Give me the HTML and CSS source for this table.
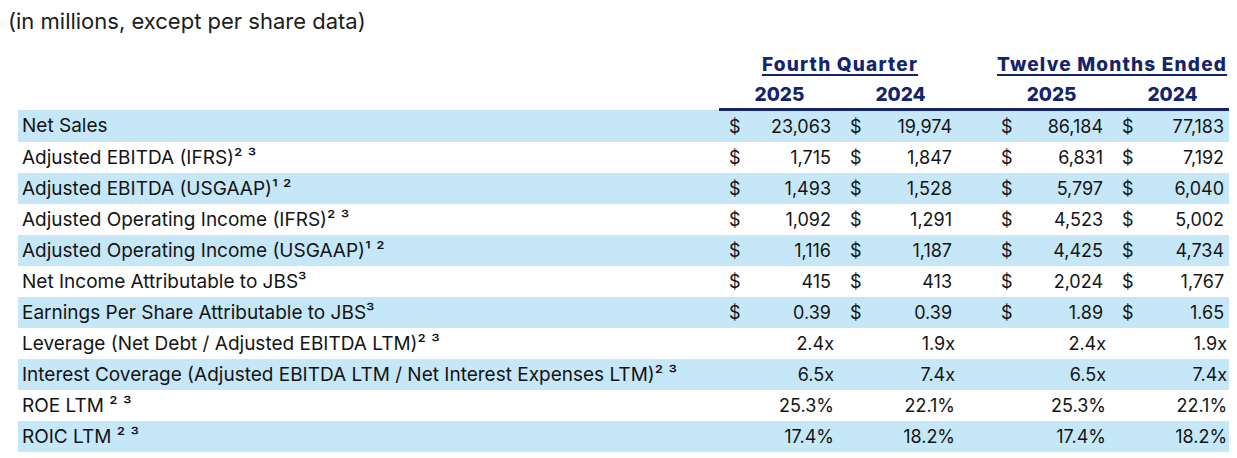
FILE: index.html
```html
<!DOCTYPE html>
<html lang="en">
<head>
<meta charset="utf-8">
<title>Financial Highlights</title>
<link rel="stylesheet" href="styles.css">
</head>
<body>
<p class="note">(in millions, except per share data)</p>
<table class="fin">
  <colgroup>
    <col class="c-label">
    <col class="c-cur"><col class="c-num">
    <col class="c-cur"><col class="c-num">
    <col class="c-gap">
    <col class="c-cur"><col class="c-num">
    <col class="c-cur"><col class="c-num">
  </colgroup>
  <thead>
    <tr class="group">
      <th></th>
      <th colspan="4"><span class="ul">Fourth Quarter</span></th>
      <th></th>
      <th colspan="4"><span class="ul">Twelve Months Ended</span></th>
    </tr>
    <tr class="years">
      <th></th>
      <th colspan="2">2025</th>
      <th colspan="2">2024</th>
      <th></th>
      <th colspan="2">2025</th>
      <th colspan="2">2024</th>
    </tr>
  </thead>
  <tbody>
    <tr class="band"><td class="lbl">Net Sales</td><td class="cur">$</td><td class="num">23,063</td><td class="cur">$</td><td class="num">19,974</td><td></td><td class="cur">$</td><td class="num">86,184</td><td class="cur">$</td><td class="num">77,183</td></tr>
    <tr><td class="lbl">Adjusted EBITDA (IFRS)² ³</td><td class="cur">$</td><td class="num">1,715</td><td class="cur">$</td><td class="num">1,847</td><td></td><td class="cur">$</td><td class="num">6,831</td><td class="cur">$</td><td class="num">7,192</td></tr>
    <tr class="band"><td class="lbl">Adjusted EBITDA (USGAAP)¹ ²</td><td class="cur">$</td><td class="num">1,493</td><td class="cur">$</td><td class="num">1,528</td><td></td><td class="cur">$</td><td class="num">5,797</td><td class="cur">$</td><td class="num">6,040</td></tr>
    <tr><td class="lbl">Adjusted Operating Income (IFRS)² ³</td><td class="cur">$</td><td class="num">1,092</td><td class="cur">$</td><td class="num">1,291</td><td></td><td class="cur">$</td><td class="num">4,523</td><td class="cur">$</td><td class="num">5,002</td></tr>
    <tr class="band"><td class="lbl">Adjusted Operating Income (USGAAP)¹ ²</td><td class="cur">$</td><td class="num">1,116</td><td class="cur">$</td><td class="num">1,187</td><td></td><td class="cur">$</td><td class="num">4,425</td><td class="cur">$</td><td class="num">4,734</td></tr>
    <tr><td class="lbl">Net Income Attributable to JBS³</td><td class="cur">$</td><td class="num">415</td><td class="cur">$</td><td class="num">413</td><td></td><td class="cur">$</td><td class="num">2,024</td><td class="cur">$</td><td class="num">1,767</td></tr>
    <tr class="band"><td class="lbl">Earnings Per Share Attributable to JBS³</td><td class="cur">$</td><td class="num">0.39</td><td class="cur">$</td><td class="num">0.39</td><td></td><td class="cur">$</td><td class="num">1.89</td><td class="cur">$</td><td class="num">1.65</td></tr>
    <tr><td class="lbl">Leverage (Net Debt / Adjusted EBITDA LTM)² ³</td><td class="cur"></td><td class="num ratio">2.4x</td><td class="cur"></td><td class="num ratio">1.9x</td><td></td><td class="cur"></td><td class="num ratio">2.4x</td><td class="cur"></td><td class="num ratio">1.9x</td></tr>
    <tr class="band"><td class="lbl">Interest Coverage (Adjusted EBITDA LTM / Net Interest Expenses LTM)² ³</td><td class="cur"></td><td class="num ratio">6.5x</td><td class="cur"></td><td class="num ratio">7.4x</td><td></td><td class="cur"></td><td class="num ratio">6.5x</td><td class="cur"></td><td class="num ratio">7.4x</td></tr>
    <tr><td class="lbl">ROE LTM ² ³</td><td class="cur"></td><td class="num ratio">25.3%</td><td class="cur"></td><td class="num ratio">22.1%</td><td></td><td class="cur"></td><td class="num ratio">25.3%</td><td class="cur"></td><td class="num ratio">22.1%</td></tr>
    <tr class="band"><td class="lbl">ROIC LTM ² ³</td><td class="cur"></td><td class="num ratio">17.4%</td><td class="cur"></td><td class="num ratio">18.2%</td><td></td><td class="cur"></td><td class="num ratio">17.4%</td><td class="cur"></td><td class="num ratio">18.2%</td></tr>
  </tbody>
</table>
</body>
</html>
```
FILE: styles.css
```css
html, body {
  background: #ffffff;
}
body {
  margin: 8px;
  font-family: "Inter", "Liberation Sans", sans-serif;
  color: #141414;
}
.note {
  margin: 0;
  font-size: 22px;
  line-height: 26px;
  color: #1c1c1c;
}
.fin {
  margin: 12px 0 0 10px;
  border-collapse: collapse;
  table-layout: fixed;
  width: 1215px;
  font-size: 18px;
}
.c-label { width: 701px; }
.c-cur { width: 40px; }
.c-num { width: 81px; }
.c-gap { width: 30px; }
.fin th, .fin td {
  padding: 0;
  white-space: nowrap;
}
.fin thead th {
  color: #14246b;
  font-weight: 800;
  font-size: 19px;
  text-align: center;
}
.group th {
  height: 30px;
  vertical-align: bottom;
  font-size: 21px;
  letter-spacing: 1.2px;
  padding-bottom: 3px;
}
.ul {
  text-decoration: underline;
  text-decoration-thickness: 2px;
  text-underline-offset: 3px;
}
.years th {
  height: 27px;
  border-bottom: 3px solid #14246b;
  vertical-align: bottom;
  padding-bottom: 2px;
}
.years th:first-child {
  border-bottom: none;
}
.fin tbody td {
  height: 31px;
  vertical-align: middle;
}
.band td {
  background: #c6e7f8;
}
.lbl {
  padding-left: 4px !important;
  font-size: 19px;
}
.cur {
  padding-left: 10px !important;
  text-align: left;
}
.num {
  text-align: right;
  padding-right: 9px !important;
}
.num.ratio {
  padding-right: 6px !important;
}
```
